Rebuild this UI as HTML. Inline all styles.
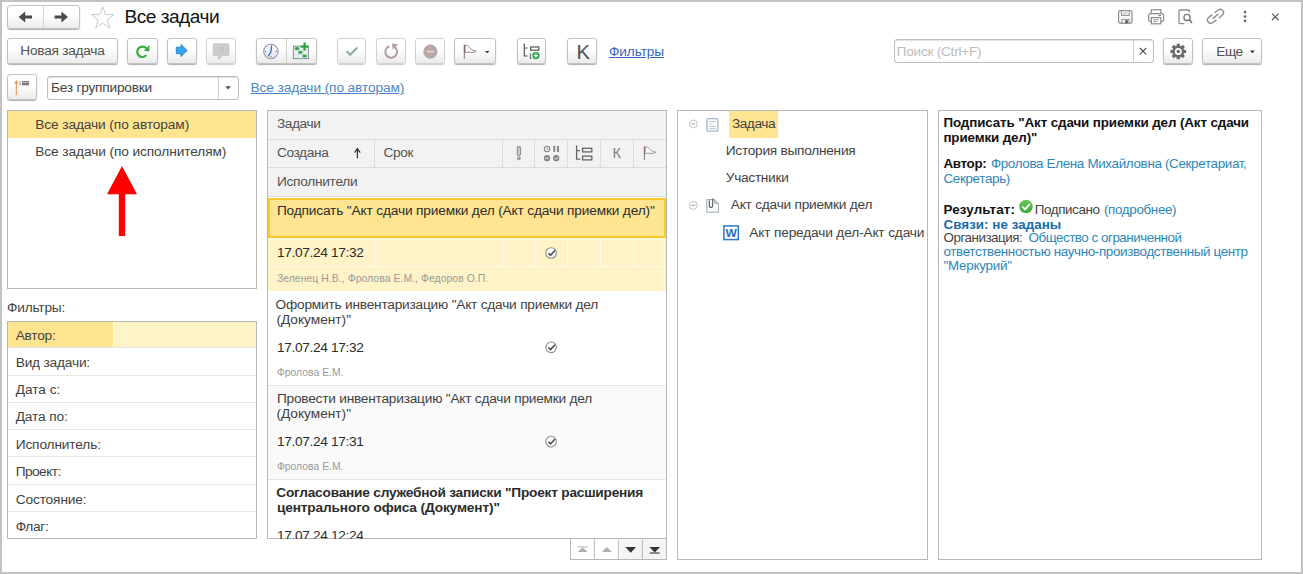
<!DOCTYPE html>
<html lang="ru">
<head>
<meta charset="utf-8">
<title>Все задачи</title>
<style>
*{box-sizing:border-box;margin:0;padding:0}
html,body{width:1303px;height:574px;overflow:hidden;background:#fff}
body{font-family:"Liberation Sans",sans-serif;font-size:13px;color:#333;position:relative}
.frame{position:absolute;left:0;top:0;width:1303px;height:574px;border:2px solid #c2c2c2;z-index:50;pointer-events:none}
.a{position:absolute}
.btn{position:absolute;height:25.5px;border:1px solid #c2c2c2;border-radius:3px;background:linear-gradient(#ffffff 0%,#ffffff 40%,#ebebeb 100%);box-shadow:0 1px 1px #b0b0b0}
.inp{position:absolute;border:1px solid #bdbdbd;border-radius:3px;background:#fff;box-shadow:inset 0 1px 1px #e2e2e2}
.panel{position:absolute;border:1px solid #b8b8b8;background:#fff}
.t{position:absolute;white-space:pre}
svg{position:absolute;overflow:visible}
</style>
</head>
<body>

<!-- ===== title row ===== -->
<div class="btn" style="left:7px;top:5px;width:73px;height:24px"></div>
<div class="a" style="left:43px;top:6px;width:1px;height:22px;background:#d4d4d4"></div>
<svg style="left:0;top:0" width="130" height="34" viewBox="0 0 130 34">
  <path d="M18.6 17 L25.2 11.4 V15.6 H32 V18.4 H25.2 V22.6 Z" fill="#4a4a4a"/>
  <path d="M68 17 L61.4 11.4 V15.6 H54.6 V18.4 H61.4 V22.6 Z" fill="#4a4a4a"/>
  <path d="M102.7 6.8 L105.6 14.4 L113.9 14.7 L107.4 19.9 L109.7 27.8 L102.7 23.2 L95.7 27.8 L98 19.9 L91.5 14.7 L99.8 14.4 Z" fill="#fff" stroke="#c3cbd2" stroke-width="1"/>
</svg>

<!-- top right icons -->
<svg id="tricons" style="left:0;top:0" width="1303" height="34" viewBox="0 0 1303 34"><rect x="1118.6" y="10.6" width="13.4" height="12.6" rx="1.6" fill="#fafafa" stroke="#8c8c8c" stroke-width="1.2"/><rect x="1121.6" y="10.6" width="7.6" height="4.8" fill="#fff" stroke="#8c8c8c" stroke-width="1"/><path d="M1123.2 12.2 H1127.6 M1123.2 13.8 H1127.6" stroke="#aaa" stroke-width=".7"/><rect x="1122" y="19.4" width="7" height="3.8" fill="#fff" stroke="#8c8c8c" stroke-width="1"/><rect x="1125" y="20.3" width="3" height="2.9" fill="#666"/><rect x="1151.2" y="9.8" width="9.6" height="4" fill="#fff" stroke="#8c8c8c" stroke-width="1.2"/><rect x="1148.6" y="13.6" width="15" height="8" rx="1.8" fill="#fafafa" stroke="#8c8c8c" stroke-width="1.2"/><rect x="1151.4" y="17.6" width="9.4" height="6.2" fill="#fff" stroke="#8c8c8c" stroke-width="1.2"/><path d="M1153.2 19.8 H1158.6 M1153.2 21.6 H1157" stroke="#8c8c8c" stroke-width=".9"/><path d="M1158.4 15.5 H1161" stroke="#777" stroke-width="1"/><path d="M1189.4 12.4 V11.2 Q1189.4 10 1188.2 10 H1180.2 Q1179 10 1179 11.2 V22.4 Q1179 23.6 1180.2 23.6 H1184.4" fill="none" stroke="#8c8c8c" stroke-width="1.3"/><circle cx="1187" cy="17.4" r="3.1" fill="#fff" stroke="#777" stroke-width="1.3"/><path d="M1189.3 19.8 L1192 23" stroke="#777" stroke-width="1.7"/><g transform="rotate(-38 1215.5 16.3)" fill="none" stroke="#8c8c8c" stroke-width="1.4"><path d="M1214 13 H1209.6 A3.3 3.3 0 0 0 1209.6 19.6 H1214"/><path d="M1217 13 H1221.4 A3.3 3.3 0 0 1 1221.4 19.6 H1217"/><path d="M1211.8 16.3 H1219.2"/></g><circle cx="1245" cy="12.1" r="1.35" fill="#666"/><circle cx="1245" cy="16.5" r="1.35" fill="#666"/><circle cx="1245" cy="20.9" r="1.35" fill="#666"/><path d="M1272 13.6 L1278.6 20.2 M1278.6 13.6 L1272 20.2" stroke="#666" stroke-width="1.3"/></svg>

<!-- ===== toolbar row 1 ===== -->
<div class="btn" style="left:7px;top:38px;width:111px"></div>
<div class="btn" style="left:127.4px;top:38px;width:30.2px"></div>
<div class="btn" style="left:166.5px;top:38px;width:30.2px"></div>
<div class="btn" style="left:206px;top:38px;width:30px;box-shadow:0 1px 1px #cfcfcf;border-color:#d2d2d2"></div>
<div class="btn" style="left:256.3px;top:38px;width:60.5px"></div>
<div class="a" style="left:286px;top:39px;width:1px;height:23.5px;background:#d0d0d0"></div>
<div class="btn" style="left:336.9px;top:38px;width:29.6px;box-shadow:0 1px 1px #cfcfcf;border-color:#d2d2d2"></div>
<div class="btn" style="left:376px;top:38px;width:30px;box-shadow:0 1px 1px #cfcfcf;border-color:#d2d2d2"></div>
<div class="btn" style="left:415.2px;top:38px;width:30px;box-shadow:0 1px 1px #cfcfcf;border-color:#d2d2d2"></div>
<div class="btn" style="left:454.3px;top:38px;width:42.2px"></div>
<div class="btn" style="left:516.9px;top:38px;width:29.6px"></div>
<div class="btn" style="left:567.2px;top:38px;width:30px"></div>

<div class="inp" style="left:893.5px;top:39.3px;width:260px;height:23.3px"></div>
<div class="a" style="left:1132.6px;top:40.3px;width:1px;height:21.3px;background:#d0d0d0"></div>
<div class="btn" style="left:1163.4px;top:38px;width:29.8px"></div>
<div class="btn" style="left:1202.4px;top:38px;width:59.2px"></div>

<svg id="tb1" style="left:0;top:30px" width="1303" height="40" viewBox="0 30 1303 40"><path d="M146.38 55.14 A5.2 5.2 0 1 1 146.26 48.32" fill="none" stroke="#36ad3b" stroke-width="2.2"/><path d="M149.3 45 V51.6 L143.8 50.7 Z" fill="#36ad3b"/><path d="M176.3 47.3 H181 V44.5 L187.2 50.5 L181 56.5 V53.7 H176.3 Z" fill="#38a6ec" stroke="#2a7fc6" stroke-width=".9" stroke-linejoin="round"/><path d="M214.4 43.8 H227.8 Q229 43.8 229 45 V54.3 Q229 55.5 227.8 55.5 H222.6 L218.4 59.4 L218.8 55.5 H214.4 Q213.2 55.5 213.2 54.3 V45 Q213.2 43.8 214.4 43.8 Z" fill="#cdcdcd" stroke="#c2c2c2" stroke-width=".8"/><text x="221.1" y="53.4" font-family="Liberation Sans, sans-serif" font-size="9.5" text-anchor="middle" fill="#b4b4b4">?</text><defs><linearGradient id="cg" x1="0" y1="0" x2="0" y2="1"><stop offset="0" stop-color="#ffffff"/><stop offset="1" stop-color="#d6e2f2"/></linearGradient></defs><circle cx="270.9" cy="51.5" r="7.2" fill="url(#cg)" stroke="#8c9bb3" stroke-width="1.1"/><path d="M271.6 45.8 L270.9 51.8 L268.6 55.8" fill="none" stroke="#2c5fb4" stroke-width="1.2" stroke-linecap="round" stroke-linejoin="miter"/><circle cx="276.2" cy="51.5" r=".7" fill="#e0605a"/><circle cx="265.6" cy="51.5" r=".7" fill="#e0605a"/><circle cx="270.9" cy="56.8" r=".7" fill="#e0605a"/><rect x="293.4" y="46.2" width="15" height="12.4" fill="#edf1f6" stroke="#7f8c9c" stroke-width="1"/><path d="M293.4 50.3 H308.4 M293.4 54.4 H308.4 M298.4 46.2 V58.6 M303.4 46.2 V58.6" stroke="#c3ccd8" stroke-width=".6"/><ellipse cx="297" cy="48.6" rx="2.4" ry="1.5" fill="#3aa63e"/><ellipse cx="300.4" cy="52.2" rx="2.3" ry="1.5" fill="#3aa63e"/><ellipse cx="304.6" cy="56" rx="2.4" ry="1.5" fill="#3aa63e"/><path d="M304.6 42.6 V50.6 M300.6 46.6 H308.6" stroke="#2ea436" stroke-width="2.2"/><path d="M346.6 51.2 L350.2 54.8 L357.4 47.4" fill="none" stroke="#92b3a3" stroke-width="2.2"/><path d="M394.33 46.80 A5.9 5.9 0 1 1 389.38 46.19" fill="none" stroke="#b3a0a0" stroke-width="2"/><path d="M392 43.5 L398.1 44.2 L392.7 49.8 Z" fill="#b3a0a0"/><circle cx="430.4" cy="51.7" r="7.1" fill="#b9a6a6"/><rect x="426.9" y="50.8" width="7" height="1.6" fill="#e2d8d8"/><path d="M464.35 52.4 V58.7" stroke="#7c7c7c" stroke-width="1.1"/><path d="M464.35 44.8 V52.6" stroke="#8a4a42" stroke-width="1.2"/><path d="M465 45.4 C469.5 44.6 469.5 50.6 476.2 51.2 C472.6 54 468.6 51 465 52.6 Z" fill="#fdfdfd" stroke="#7c7c7c" stroke-width=".9"/><path d="M484.8 50.9 H489.6 L487.2 53.3 Z" fill="#333"/><path d="M524.3 43.4 V56 H527.6 M524.3 48 H527.6" stroke="#555" stroke-width="1.2" fill="none"/><rect x="530.6" y="47" width="8.2" height="3.2" fill="none" stroke="#555" stroke-width="1.2"/><path d="M531.6 54.2 H530.3 V58.4 H531.6" stroke="#555" stroke-width="1" fill="none"/><circle cx="535.9" cy="55.6" r="3.6" fill="#1fa647"/><path d="M535.9 53.4 V57.8 M533.7 55.6 H538.1" stroke="#fff" stroke-width="1.2"/><path d="M1139.8 48 L1146.2 54.4 M1146.2 48 L1139.8 54.4" stroke="#555" stroke-width="1.2"/><path d="M1186.15 49.97 L1186.15 53.03 L1183.94 53.22 L1183.51 54.27 L1184.93 55.97 L1182.77 58.13 L1181.07 56.71 L1180.02 57.14 L1179.83 59.35 L1176.77 59.35 L1176.58 57.14 L1175.53 56.71 L1173.83 58.13 L1171.67 55.97 L1173.09 54.27 L1172.66 53.22 L1170.45 53.03 L1170.45 49.97 L1172.66 49.78 L1173.09 48.73 L1171.67 47.03 L1173.83 44.87 L1175.53 46.29 L1176.58 45.86 L1176.77 43.65 L1179.83 43.65 L1180.02 45.86 L1181.07 46.29 L1182.77 44.87 L1184.93 47.03 L1183.51 48.73 L1183.94 49.78 Z" fill="#6c6c6c"/><circle cx="1178.3" cy="51.5" r="3.5" fill="#fff"/><circle cx="1178.3" cy="51.5" r="1.7" fill="#6c6c6c"/><path d="M1250 50.6 H1254.8 L1252.4 53.2 Z" fill="#333"/></svg>

<!-- ===== toolbar row 2 ===== -->
<div class="btn" style="left:6.8px;top:74.2px;width:30px"></div>
<div class="inp" style="left:47.2px;top:76px;width:192px;height:23.6px"></div>
<div class="a" style="left:217.8px;top:77px;width:1px;height:21.6px;background:#d0d0d0"></div>
<svg id="tb2" style="left:0;top:70px" width="260" height="36" viewBox="0 70 260 36"><path d="M16.3 82 V94.9" stroke="#f28c52" stroke-width="1.1"/><path d="M14.1 83.6 L16.3 80 L18.5 83.6 Z" fill="#f28c52"/><rect x="21.9" y="81.3" width="7.2" height=".95" fill="#4a4a4a"/><rect x="19.5" y="81.3" width="1.1" height=".95" fill="#777"/><rect x="21.9" y="82.8" width="7.2" height=".95" fill="#4a4a4a"/><rect x="19.5" y="82.8" width="1.1" height=".95" fill="#777"/><rect x="21.9" y="84.3" width="7.2" height=".95" fill="#4a4a4a"/><rect x="19.5" y="84.3" width="1.1" height=".95" fill="#777"/><path d="M225.5 86.3 H230.7 L228.1 89.4 Z" fill="#444"/></svg>

<!-- ===== left list ===== -->
<div class="panel" style="left:6.5px;top:110px;width:250.5px;height:179px"></div>
<div class="a" style="left:7.5px;top:111px;width:248.5px;height:26.6px;background:#ffe590"></div>
<svg style="left:100px;top:160px" width="44" height="80" viewBox="0 0 44 80">
  <path d="M22 6 L37 34.3 H25.2 V76 H18.8 V34.3 H7 Z" fill="#fe0000"/>
</svg>

<!-- ===== filter table ===== -->
<div class="panel" style="left:6.5px;top:321px;width:250.5px;height:218px"></div>
<div class="a" style="left:7.5px;top:322px;width:106px;height:25.5px;background:#ffe48f"></div>
<div class="a" style="left:113px;top:322px;width:143px;height:25.5px;background:#fff3c8"></div>
<div class="a" style="left:113px;top:322px;width:1px;height:25.5px;background:#fff9e2"></div>
<div class="a" style="left:7.5px;top:347.2px;width:248.5px;height:1px;background:#e8e8e8"></div>
<div class="a" style="left:7.5px;top:374.5px;width:248.5px;height:1px;background:#e8e8e8"></div>
<div class="a" style="left:7.5px;top:401.8px;width:248.5px;height:1px;background:#e8e8e8"></div>
<div class="a" style="left:7.5px;top:429.1px;width:248.5px;height:1px;background:#e8e8e8"></div>
<div class="a" style="left:7.5px;top:456.4px;width:248.5px;height:1px;background:#e8e8e8"></div>
<div class="a" style="left:7.5px;top:483.8px;width:248.5px;height:1px;background:#e8e8e8"></div>
<div class="a" style="left:7.5px;top:511.1px;width:248.5px;height:1px;background:#e8e8e8"></div>


<!-- ===== tasks panel ===== -->
<div class="panel" style="left:267.3px;top:110px;width:400px;height:429.4px"></div>
<div class="a" style="left:570.3px;top:538.4px;width:97px;height:21.6px;border:1px solid #b8b8b8;background:linear-gradient(90deg,#fff 0,#fff 48px,#f4f4f4 49px,#f4f4f4 100%)"></div>
<div class="a" style="left:268.3px;top:111px;width:398px;height:86px;background:#f2f2f2;"></div>
<div class="a" style="left:268.3px;top:138.9px;width:398px;height:1px;background:#dcdcdc;"></div>
<div class="a" style="left:268.3px;top:167.4px;width:398px;height:1px;background:#dcdcdc;"></div>
<div class="a" style="left:268.3px;top:196.4px;width:398px;height:1px;background:#dcdcdc;"></div>
<div class="a" style="left:374px;top:139.5px;width:1px;height:28px;background:#dcdcdc;"></div>
<div class="a" style="left:502px;top:139.5px;width:1px;height:28px;background:#dcdcdc;"></div>
<div class="a" style="left:534px;top:139.5px;width:1px;height:28px;background:#dcdcdc;"></div>
<div class="a" style="left:567px;top:139.5px;width:1px;height:28px;background:#dcdcdc;"></div>
<div class="a" style="left:600px;top:139.5px;width:1px;height:28px;background:#dcdcdc;"></div>
<div class="a" style="left:633px;top:139.5px;width:1px;height:28px;background:#dcdcdc;"></div>
<div class="a" style="left:268.3px;top:197.6px;width:398px;height:40.8px;background:#ffe592;border:2px solid #f9cb2d;"></div>
<div class="a" style="left:268.3px;top:238.4px;width:398px;height:52.8px;background:#fff3c8;"></div>
<div class="a" style="left:268.3px;top:239.0px;width:398px;height:1px;background:#fffaeb;"></div>
<div class="a" style="left:268.3px;top:266.2px;width:398px;height:1px;background:#fffaeb;"></div>
<div class="a" style="left:374px;top:239.5px;width:1px;height:27px;background:#fffaeb;"></div>
<div class="a" style="left:502px;top:239.5px;width:1px;height:27px;background:#fffaeb;"></div>
<div class="a" style="left:534px;top:239.5px;width:1px;height:27px;background:#fffaeb;"></div>
<div class="a" style="left:567px;top:239.5px;width:1px;height:27px;background:#fffaeb;"></div>
<div class="a" style="left:600px;top:239.5px;width:1px;height:27px;background:#fffaeb;"></div>
<div class="a" style="left:633px;top:239.5px;width:1px;height:27px;background:#fffaeb;"></div>
<div class="a" style="left:268.3px;top:385px;width:398px;height:1px;background:#e6e6e6;"></div>
<div class="a" style="left:268.3px;top:386px;width:398px;height:93px;background:#fafafa;"></div>
<div class="a" style="left:268.3px;top:479px;width:398px;height:1px;background:#e6e6e6;"></div>
<svg style="left:260px;top:105px" width="420" height="460" viewBox="260 105 420 460"><circle cx="551.1" cy="253" r="5.3" fill="#fff" stroke="#8c8c8c" stroke-width="1.1"/><path d="M548.4 253.2 L550.5 255.3 L555.0 250.4" fill="none" stroke="#444" stroke-width="1.5"/><circle cx="551.1" cy="347.3" r="5.3" fill="#fff" stroke="#8c8c8c" stroke-width="1.1"/><path d="M548.4 347.5 L550.5 349.6 L555.0 344.7" fill="none" stroke="#444" stroke-width="1.5"/><circle cx="551.1" cy="441.6" r="5.3" fill="#fff" stroke="#8c8c8c" stroke-width="1.1"/><path d="M548.4 441.8 L550.5 443.90000000000003 L555.0 439.0" fill="none" stroke="#444" stroke-width="1.5"/><path d="M357.4 149.2 V158.3" stroke="#333" stroke-width="1.2" fill="none"/><path d="M354.6 152.6 L357.4 148.6 L360.2 152.6" stroke="#333" stroke-width="1.2" fill="none"/><rect x="517.3" y="146.6" width="3.2" height="8.8" rx="1.4" fill="#cfcfcf" stroke="#8c8c8c" stroke-width="1.1"/><circle cx="518.9" cy="158.3" r="1.5" fill="#b0b0b0" stroke="#8c8c8c" stroke-width=".9"/><circle cx="547" cy="149" r="2.7" fill="#f4f4f4" stroke="#888" stroke-width="1.1"/><path d="M547 147.5 V149.2 H548.3" stroke="#888" stroke-width=".8" fill="none"/><rect x="553.3" y="145.9" width="2" height="6" fill="#8a8a8a"/><rect x="557" y="145.9" width="2" height="6" fill="#8a8a8a"/><circle cx="547" cy="158.2" r="3.1" fill="#858585"/><rect x="545.3" y="157.6" width="3.4" height="1.2" fill="#e4e4e4"/><circle cx="556.2" cy="158.2" r="3.1" fill="#858585"/><path d="M554.8 158.2 L555.9 159.4 L557.8 157" stroke="#f0f0f0" stroke-width="1" fill="none"/><path d="M576.6 145.4 V159.2 H580.2 M576.6 150.6 H580" stroke="#666" stroke-width="1.3" fill="none"/><rect x="582.6" y="148.3" width="9.2" height="3.6" fill="none" stroke="#666" stroke-width="1.3"/><rect x="582.6" y="156.1" width="9.2" height="3.8" fill="none" stroke="#666" stroke-width="1.3"/><path d="M644.45 153.6 V159.9" stroke="#8a8a8a" stroke-width="1.1"/><path d="M644.45 146.4 V153.8" stroke="#9a5a52" stroke-width="1.2"/><path d="M645.1 147 C649.4 146.2 649.4 151.6 655.8 152.2 C652.4 154.8 648.6 152.2 645.1 153.8 Z" fill="#fafafa" stroke="#8a8a8a" stroke-width=".9"/><path d="M594.3 539.4 V559.4" stroke="#b8b8b8" stroke-width="1"/><path d="M618.3 539.4 V559.4" stroke="#b8b8b8" stroke-width="1"/><path d="M642.4 539.4 V559.4" stroke="#b8b8b8" stroke-width="1"/><path d="M577.6 552 L582.6 547.2 L587.6 552 Z" fill="#b0b0b0"/><path d="M577.8 546.9 H587.4" stroke="#b0b0b0" stroke-width="1"/><path d="M601.9 552 L606.9 547 L611.9 552 Z" fill="#b0b0b0"/><path d="M625.4 547 L636 547 L630.7 552.8 Z" fill="#333"/><path d="M649.4 547 L660 547 L654.7 552.4 Z" fill="#333"/><path d="M649.8 553 H659.6" stroke="#333" stroke-width="1.1"/></svg>

<!-- ===== tree panel ===== -->
<div class="panel" style="left:677.3px;top:110px;width:251.2px;height:450px"></div>
<div class="a" style="left:728.8px;top:111px;width:48.8px;height:26.6px;background:#ffe591"></div>
<svg id="treeic" style="left:680px;top:110px" width="70" height="140" viewBox="680 110 70 140"><circle cx="693.3" cy="123.9" r="4" fill="#fff" stroke="#c4c4c4" stroke-width="1"/><path d="M691.2 123.9 H695.4" stroke="#b4b4b4" stroke-width="1.2"/><circle cx="693.3" cy="205.4" r="4" fill="#fff" stroke="#c4c4c4" stroke-width="1"/><path d="M691.2 205.4 H695.4" stroke="#b4b4b4" stroke-width="1.2"/><rect x="706.9" y="118.6" width="11" height="12.6" rx="1.2" fill="#fdfdfe" stroke="#a7b6c5" stroke-width="1.3"/><path d="M709 121.5 H715.8 M709 126.4 H715.8 M709 128.6 H715.8" stroke="#a7b6c5" stroke-width=".8"/><path d="M709 123.9 H713" stroke="#d3dbe3" stroke-width="1.2"/><path d="M706.8 199.6 H714.6 L718.4 203.4 V212.2 H706.8 Z" fill="#fff" stroke="#9aa7b4" stroke-width="1"/><path d="M714.6 199.6 V203.4 H718.4 Z" fill="#c9d2db" stroke="#9aa7b4" stroke-width=".8"/><path d="M709.3 200.2 V205.7 A1.7 1.7 0 0 0 712.7 205.7 V198.4" fill="none" stroke="#555" stroke-width="1.1"/><rect x="723.9" y="225.9" width="14.4" height="13.7" fill="#fff" stroke="#2f7bd0" stroke-width="1.5"/><text x="725.5" y="236.8" font-family="Liberation Sans, sans-serif" font-weight="bold" font-size="10.2" textLength="11.3" lengthAdjust="spacingAndGlyphs" fill="#2a6fc4">W</text></svg>

<!-- ===== details panel ===== -->
<div class="panel" style="left:937.5px;top:110px;width:324.8px;height:450px"></div>
<svg id="detic" style="left:1015px;top:198px" width="22" height="18" viewBox="1015 198 22 18"><defs><linearGradient id="gg" x1="0" y1="0" x2="0" y2="1"><stop offset="0" stop-color="#6cc85c"/><stop offset="1" stop-color="#3aa838"/></linearGradient></defs><circle cx="1026" cy="206.5" r="6.8" fill="url(#gg)"/><path d="M1022.4 206.6 L1025.1 209.3 L1030 203.8" fill="none" stroke="#fff" stroke-width="1.9"/></svg>

<div class="t" style="left:124.4px;top:4.8px;font-size:19.1px;line-height:24px;color:#111;letter-spacing:-0.485px;">Все задачи</div>
<div class="t" style="left:20.3px;top:43px;font-size:13.7px;line-height:15px;color:#505050;letter-spacing:-0.256px;">Новая задача</div>
<div class="t" style="left:609px;top:44px;font-size:13.7px;line-height:15px;color:#3a63c8;letter-spacing:-0.118px;text-decoration:underline;">Фильтры</div>
<div class="t" style="left:896.6px;top:44px;font-size:13.7px;line-height:15px;color:#bcbcbc;letter-spacing:-0.271px;">Поиск (Ctrl+F)</div>
<div class="t" style="left:1216.3px;top:44px;font-size:13.7px;line-height:15px;color:#505050;letter-spacing:-0.486px;">Еще</div>
<div class="t" style="left:576.5px;top:40.6px;font-size:20.3px;line-height:22px;color:#505050;letter-spacing:-2.431px;">K</div>
<div class="t" style="left:51px;top:80px;font-size:13.7px;line-height:15px;color:#424242;letter-spacing:-0.225px;">Без группировки</div>
<div class="t" style="left:250.6px;top:80px;font-size:13.7px;line-height:15px;color:#4a86c5;letter-spacing:-0.102px;text-decoration:underline;">Все задачи (по авторам)</div>
<div class="t" style="left:35.3px;top:117px;font-size:13.7px;line-height:15px;color:#424242;letter-spacing:-0.098px;">Все задачи (по авторам)</div>
<div class="t" style="left:35.3px;top:144px;font-size:13.7px;line-height:15px;color:#424242;letter-spacing:-0.093px;">Все задачи (по исполнителям)</div>
<div class="t" style="left:7px;top:300px;font-size:13.7px;line-height:15px;color:#444;letter-spacing:-0.191px;">Фильтры:</div>
<div class="t" style="left:15.7px;top:328px;font-size:13.7px;line-height:15px;color:#424242;letter-spacing:-0.225px;">Автор:</div>
<div class="t" style="left:15.7px;top:355px;font-size:13.7px;line-height:15px;color:#424242;letter-spacing:-0.186px;">Вид задачи:</div>
<div class="t" style="left:15.7px;top:382px;font-size:13.7px;line-height:15px;color:#424242;letter-spacing:-0.024px;">Дата с:</div>
<div class="t" style="left:15.7px;top:409px;font-size:13.7px;line-height:15px;color:#424242;letter-spacing:-0.107px;">Дата по:</div>
<div class="t" style="left:15.7px;top:437px;font-size:13.7px;line-height:15px;color:#424242;letter-spacing:-0.133px;">Исполнитель:</div>
<div class="t" style="left:15.7px;top:464px;font-size:13.7px;line-height:15px;color:#424242;letter-spacing:-0.542px;">Проект:</div>
<div class="t" style="left:15.7px;top:492px;font-size:13.7px;line-height:15px;color:#424242;letter-spacing:-0.131px;">Состояние:</div>
<div class="t" style="left:15.7px;top:519px;font-size:13.7px;line-height:15px;color:#424242;letter-spacing:-0.312px;">Флаг:</div>
<div class="t" style="left:276.9px;top:116px;font-size:13.7px;line-height:15px;color:#525252;letter-spacing:-0.411px;">Задачи</div>
<div class="t" style="left:276.9px;top:145px;font-size:13.7px;line-height:15px;color:#525252;letter-spacing:-0.371px;">Создана</div>
<div class="t" style="left:383.6px;top:145px;font-size:13.7px;line-height:15px;color:#525252;letter-spacing:-0.427px;">Срок</div>
<div class="t" style="left:276.9px;top:173.5px;font-size:13.7px;line-height:15px;color:#525252;letter-spacing:-0.274px;">Исполнители</div>
<div class="t" style="left:612.5px;top:145.6px;font-size:14.5px;line-height:15px;color:#7c7c7c;letter-spacing:-0.753px;">К</div>
<div class="t" style="left:276.9px;top:203px;font-size:13.7px;line-height:15px;color:#2c2c2c;letter-spacing:-0.16px;">Подписать "Акт сдачи приемки дел (Акт сдачи приемки дел)"</div>
<div class="t" style="left:276.9px;top:245px;font-size:13.7px;line-height:15px;color:#2c2c2c;letter-spacing:-0.339px;">17.07.24 17:32</div>
<div class="t" style="left:276.9px;top:273px;font-size:10.4px;line-height:12px;color:#9a9a9a;letter-spacing:0.064px;">Зеленец Н.В., Фролова Е.М., Федоров О.П.</div>
<div class="t" style="left:275.6px;top:297px;font-size:13.7px;line-height:15px;color:#424242;letter-spacing:-0.22px;">Оформить инвентаризацию "Акт сдачи приемки дел</div>
<div class="t" style="left:276.4px;top:312px;font-size:13.7px;line-height:15px;color:#424242;letter-spacing:-0.009px;">(Документ)"</div>
<div class="t" style="left:276.9px;top:340px;font-size:13.7px;line-height:15px;color:#2c2c2c;letter-spacing:-0.339px;">17.07.24 17:32</div>
<div class="t" style="left:276.9px;top:367px;font-size:10.4px;line-height:12px;color:#9a9a9a;letter-spacing:-0.002px;">Фролова Е.М.</div>
<div class="t" style="left:276.9px;top:391px;font-size:13.7px;line-height:15px;color:#424242;letter-spacing:-0.225px;">Провести инвентаризацию "Акт сдачи приемки дел</div>
<div class="t" style="left:276.4px;top:406px;font-size:13.7px;line-height:15px;color:#424242;letter-spacing:-0.009px;">(Документ)"</div>
<div class="t" style="left:276.9px;top:434px;font-size:13.7px;line-height:15px;color:#2c2c2c;letter-spacing:-0.339px;">17.07.24 17:31</div>
<div class="t" style="left:276.9px;top:461px;font-size:10.4px;line-height:12px;color:#9a9a9a;letter-spacing:-0.002px;">Фролова Е.М.</div>
<div class="t" style="left:276.3px;top:485px;font-size:13.7px;line-height:15px;color:#2c2c2c;letter-spacing:-0.222px;font-weight:bold;">Согласование служебной записки "Проект расширения</div>
<div class="t" style="left:276.9px;top:500px;font-size:13.7px;line-height:15px;color:#2c2c2c;letter-spacing:-0.144px;font-weight:bold;">центрального офиса (Документ)"</div>
<div class="t" style="left:276.9px;top:528px;font-size:13.7px;line-height:15px;color:#2c2c2c;letter-spacing:-0.339px;height:11px;overflow:hidden;">17.07.24 12:24</div>
<div class="t" style="left:731.9px;top:116px;font-size:13.7px;line-height:15px;color:#424242;letter-spacing:-0.454px;">Задача</div>
<div class="t" style="left:725.8px;top:143px;font-size:13.7px;line-height:15px;color:#424242;letter-spacing:-0.272px;">История выполнения</div>
<div class="t" style="left:725.8px;top:170px;font-size:13.7px;line-height:15px;color:#424242;letter-spacing:-0.299px;">Участники</div>
<div class="t" style="left:730.8px;top:197px;font-size:13.7px;line-height:15px;color:#424242;letter-spacing:-0.235px;">Акт сдачи приемки дел</div>
<div class="t" style="left:749.2px;top:224.5px;font-size:13.7px;line-height:15px;color:#424242;letter-spacing:-0.155px;">Акт передачи дел-Акт сдачи</div>
<div class="t" style="left:943.4px;top:116px;font-size:13.4px;line-height:14px;color:#111;letter-spacing:-0.114px;font-weight:bold;">Подписать "Акт сдачи приемки дел (Акт сдачи</div>
<div class="t" style="left:943.4px;top:131px;font-size:13.4px;line-height:14px;color:#111;letter-spacing:-0.13px;font-weight:bold;">приемки дел)"</div>
<div class="t" style="left:943.4px;top:157px;font-size:13.4px;line-height:14px;color:#111;letter-spacing:-0.306px;font-weight:bold;">Автор:</div>
<div class="t" style="left:990.9px;top:157px;font-size:13.4px;line-height:14px;color:#2e86b8;letter-spacing:-0.328px;">Фролова Елена Михайловна (Секретариат,</div>
<div class="t" style="left:943.4px;top:171.5px;font-size:13.4px;line-height:14px;color:#2e86b8;letter-spacing:-0.315px;">Секретарь)</div>
<div class="t" style="left:943.5px;top:202.5px;font-size:13.4px;line-height:14px;color:#111;letter-spacing:0.127px;font-weight:bold;">Результат:</div>
<div class="t" style="left:1034.8px;top:202.5px;font-size:13.4px;line-height:14px;color:#424242;letter-spacing:-0.401px;">Подписано</div>
<div class="t" style="left:1104px;top:202.5px;font-size:13.4px;line-height:14px;color:#2e86b8;letter-spacing:-0.345px;">(подробнее)</div>
<div class="t" style="left:943.5px;top:217.5px;font-size:13.4px;line-height:14px;color:#1a6ba8;letter-spacing:0.033px;font-weight:bold;">Связи: не заданы</div>
<div class="t" style="left:943.5px;top:231px;font-size:13.4px;line-height:14px;color:#444;letter-spacing:-0.482px;">Организация:</div>
<div class="t" style="left:1028.5px;top:231px;font-size:13.4px;line-height:14px;color:#2e86b8;letter-spacing:-0.479px;">Общество с ограниченной</div>
<div class="t" style="left:943.5px;top:245px;font-size:13.4px;line-height:14px;color:#2e86b8;letter-spacing:-0.353px;">ответственностью научно-производственный центр</div>
<div class="t" style="left:943.5px;top:258.5px;font-size:13.4px;line-height:14px;color:#2e86b8;letter-spacing:-0.237px;">"Меркурий"</div>

<div class="frame"></div>
</body>
</html>
